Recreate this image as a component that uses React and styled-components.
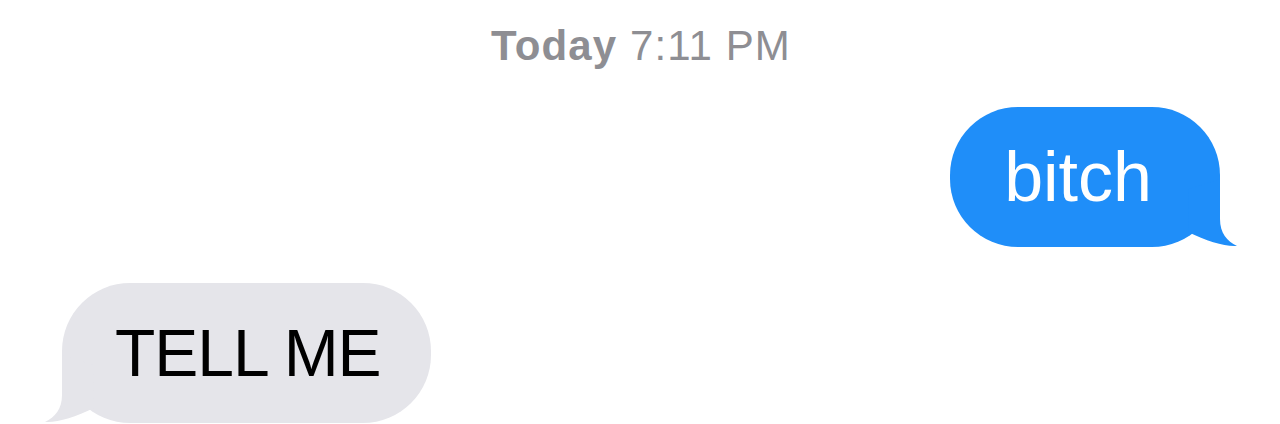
import React from 'react'
import styled, { createGlobalStyle } from 'styled-components'

const GlobalStyle = createGlobalStyle`
  html, body {
    margin: 0;
    padding: 0;
    background: #ffffff;
  }
  body {
    font-family: "Liberation Sans", Arial, sans-serif;
    -webkit-font-smoothing: antialiased;
  }
`

const Thread = styled.main`
  width: 1280px;
  height: 424px;
  box-sizing: border-box;
  padding: 22px 60px 0 62px;
  display: flex;
  flex-direction: column;
  overflow: hidden;
`

const Stamp = styled.div`
  text-align: center;
  font-size: 42px;
  letter-spacing: 1.1px;
  line-height: 48px;
  color: #8e8e93;

  b {
    font-weight: 700;
  }
`

const Row = styled.div`
  display: flex;
  justify-content: ${props => (props.$sent ? 'flex-end' : 'flex-start')};
  margin-top: ${props => props.$gap}px;
`

const Bubble = styled.div`
  position: relative;
  border-radius: 68px;
  font-size: ${props => (props.$sent ? 70 : 66)}px;
  letter-spacing: ${props => (props.$sent ? 0 : -1)}px;
  line-height: 80px;
  padding: ${props => (props.$sent ? '30px 68px 30px 54px' : '30px 50px 30px 53px')};
  background: ${props => (props.$sent ? '#1f8ef9' : '#e5e5ea')};
  color: ${props => (props.$sent ? '#ffffff' : '#000000')};
  white-space: nowrap;
`

// the little curled tail at the bottom corner of a bubble
const Tail = styled.svg`
  position: absolute;
  bottom: 0;
  width: 70px;
  height: 68px;
  ${props =>
    props.$sent
      ? 'right: -19px;'
      : 'left: -19px; transform: scaleX(-1);'}
`

function BubbleTail({ sent, color }) {
  return (
    <Tail $sent={sent} viewBox="0 0 70 68" aria-hidden="true">
      <path
        d="M51 0 L51 40 C51 54 58 62 68 67 C56 68 38 62 19 53 L20 10 Z"
        fill={color}
      />
    </Tail>
  )
}

export default function App() {
  return (
    <>
      <GlobalStyle />
      <Thread>
        <Stamp>
          <b>Today</b> 7:11 PM
        </Stamp>
        <Row $sent $gap={37}>
          <Bubble $sent>
            bitch
            <BubbleTail sent color="#1f8ef9" />
          </Bubble>
        </Row>
        <Row $gap={36}>
          <Bubble>
            TELL ME
            <BubbleTail color="#e5e5ea" />
          </Bubble>
        </Row>
      </Thread>
    </>
  )
}
